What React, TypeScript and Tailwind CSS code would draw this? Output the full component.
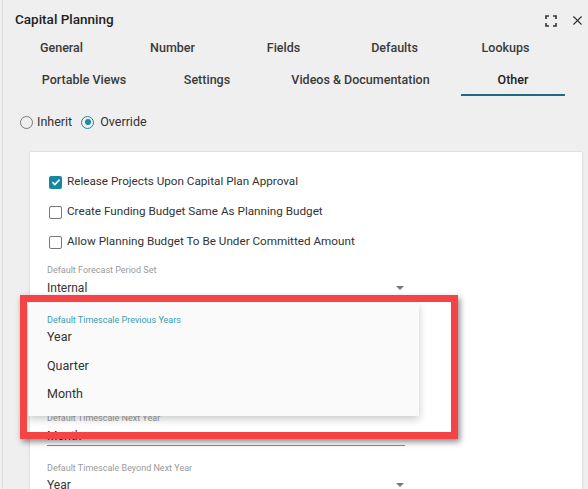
import { X } from "lucide-react";

const firstRowTabs = ["General", "Number", "Fields", "Defaults", "Lookups"];

const secondRowTabs = [
  { label: "Portable Views", width: "w-[140px]", active: false },
  { label: "Settings", width: "w-[106px]", active: false },
  { label: "Videos & Documentation", width: "w-[201px]", active: false },
  { label: "Other", width: "w-[104px]", active: true },
];

const checkOptions = [
  { label: "Release Projects Upon Capital Plan Approval", checked: true },
  { label: "Create Funding Budget Same As Planning Budget", checked: false },
  { label: "Allow Planning Budget To Be Under Committed Amount", checked: false },
];

// the two middle fields sit under the open menu
const selects = [
  { label: "Default Forecast Period Set", value: "Internal", covered: false },
  { label: "Default Timescale Previous Years", value: "Year", covered: true },
  { label: "Default Timescale Current Year", value: "Quarter", covered: true },
  { label: "Default Timescale Next Year", value: "Month", covered: false },
  { label: "Default Timescale Beyond Next Year", value: "Year", covered: false },
];

function FullscreenIcon() {
  return (
    <svg width="12" height="12" viewBox="0 0 12 12" fill="none" stroke="#333" strokeWidth="1.6">
      <path d="M1 4V1h3M8 1h3v3M11 8v3H8M4 11H1V8" />
    </svg>
  );
}

function Radio({ checked }: { checked: boolean }) {
  return checked ? (
    <span className="w-[13px] h-[13px] rounded-full border-[1.5px] border-[#1b8aa3] flex items-center justify-center">
      <span className="w-[6px] h-[6px] rounded-full bg-[#1b8aa3]" />
    </span>
  ) : (
    <span className="w-[13px] h-[13px] rounded-full border-[1.5px] border-[#7a7a7a]" />
  );
}

function Checkbox({ checked }: { checked: boolean }) {
  return checked ? (
    <span className="w-[13px] h-[13px] rounded-[2px] bg-[#16879f] flex items-center justify-center">
      <svg width="10" height="10" viewBox="0 0 10 10" fill="none" stroke="white" strokeWidth="1.6">
        <path d="M1.5 5.2l2.3 2.3L8.6 2.6" />
      </svg>
    </span>
  ) : (
    <span className="w-[13px] h-[13px] rounded-[2px] border-[1.5px] border-[#777777]" />
  );
}

function SelectField({ label, value, covered }: { label: string; value: string; covered: boolean }) {
  return (
    <div className={`h-[49.4px] pt-[8px] w-[358px] ${covered ? "invisible" : ""}`}>
      <div className="text-[9px] leading-[11px] text-[#9a9a9a]">{label}</div>
      <div className="mt-[2px] h-[19px] flex items-center justify-between border-b border-[#8a8a8a] box-content">
        <span className="text-[12px] text-[#333]">{value}</span>
        <span className="mr-[1px] w-0 h-0 border-l-[4px] border-r-[4px] border-t-[4px] border-l-transparent border-r-transparent border-t-[#777]" />
      </div>
    </div>
  );
}

export default function App() {
  return (
    <div className="relative w-[588px] h-[489px] overflow-hidden bg-[#efefef] font-[Roboto,sans-serif] text-[#333]">
      <div className="absolute left-[2px] top-0 bottom-0 w-px bg-[#dddddd]" />

      <div className="h-[32px] pt-[11px] pl-[15px] pr-[3px] flex items-start justify-between">
        <span className="text-[13.5px] leading-[16px] font-medium text-[#222]">Capital Planning</span>
        <div className="flex items-center gap-[13px] mt-[2px]">
          <FullscreenIcon />
          <X size={15} strokeWidth={1.8} color="#333" />
        </div>
      </div>

      <div className="flex h-[32px] ml-[6px]">
        {firstRowTabs.map((tab) => (
          <div key={tab} className="w-[111px] flex items-center justify-center text-[12.5px] font-medium text-[#3a3a3a]">
            {tab}
          </div>
        ))}
      </div>
      <div className="flex h-[32px] ml-[14px]">
        {secondRowTabs.map((tab) => (
          <div
            key={tab.label}
            className={`${tab.width} pt-[2px] flex items-center justify-center text-[12.5px] font-medium border-b-2 ${
              tab.active ? "border-[#1e6b86] text-[#222]" : "border-transparent text-[#3a3a3a]"
            }`}
          >
            {tab.label}
          </div>
        ))}
      </div>

      <div className="mt-[14px] h-[24px] pl-[20px] flex items-center text-[12.5px] text-[#333]">
        <Radio checked={false} />
        <span className="ml-[4px]">Inherit</span>
        <span className="ml-[9px]"><Radio checked={true} /></span>
        <span className="ml-[6px]">Override</span>
      </div>

      <div className="mt-[17px] ml-[29px] w-[554px] h-[400px] bg-white border border-[#e2e2e2] rounded-[2px] shadow-[0_1px_2px_rgba(0,0,0,0.08)] pt-[15px] pl-[17px]">
        {checkOptions.map((opt) => (
          <div key={opt.label} className="h-[30px] flex items-center pl-[2px] gap-[5px]">
            <Checkbox checked={opt.checked} />
            <span className="text-[11.7px] text-[#333]">{opt.label}</span>
          </div>
        ))}
        {selects.map((s) => (
          <SelectField key={s.label} label={s.label} value={s.value} covered={s.covered} />
        ))}
      </div>

      {/* open dropdown menu */}
      <div className="absolute left-[28px] top-[303px] w-[391px] h-[113px] bg-[#fafafa] shadow-[0_3px_8px_rgba(0,0,0,0.22)] pl-[19px]">
        <div className="mt-[12px] text-[9px] leading-[11px] text-[#3a9db3]">Default Timescale Previous Years</div>
        <div className="h-[22px] flex items-center text-[12.5px] text-[#333]">Year</div>
        <div className="h-[36px] flex items-center text-[12.5px] text-[#333]">Quarter</div>
        <div className="h-[21px] flex items-center text-[12.5px] text-[#333]">Month</div>
      </div>

      {/* annotation frame */}
      <div className="absolute left-[20px] top-[295px] w-[438px] h-[144px] border-[7px] border-[#f44446] shadow-[2px_3px_6px_rgba(0,0,0,0.45)]" />
    </div>
  );
}
